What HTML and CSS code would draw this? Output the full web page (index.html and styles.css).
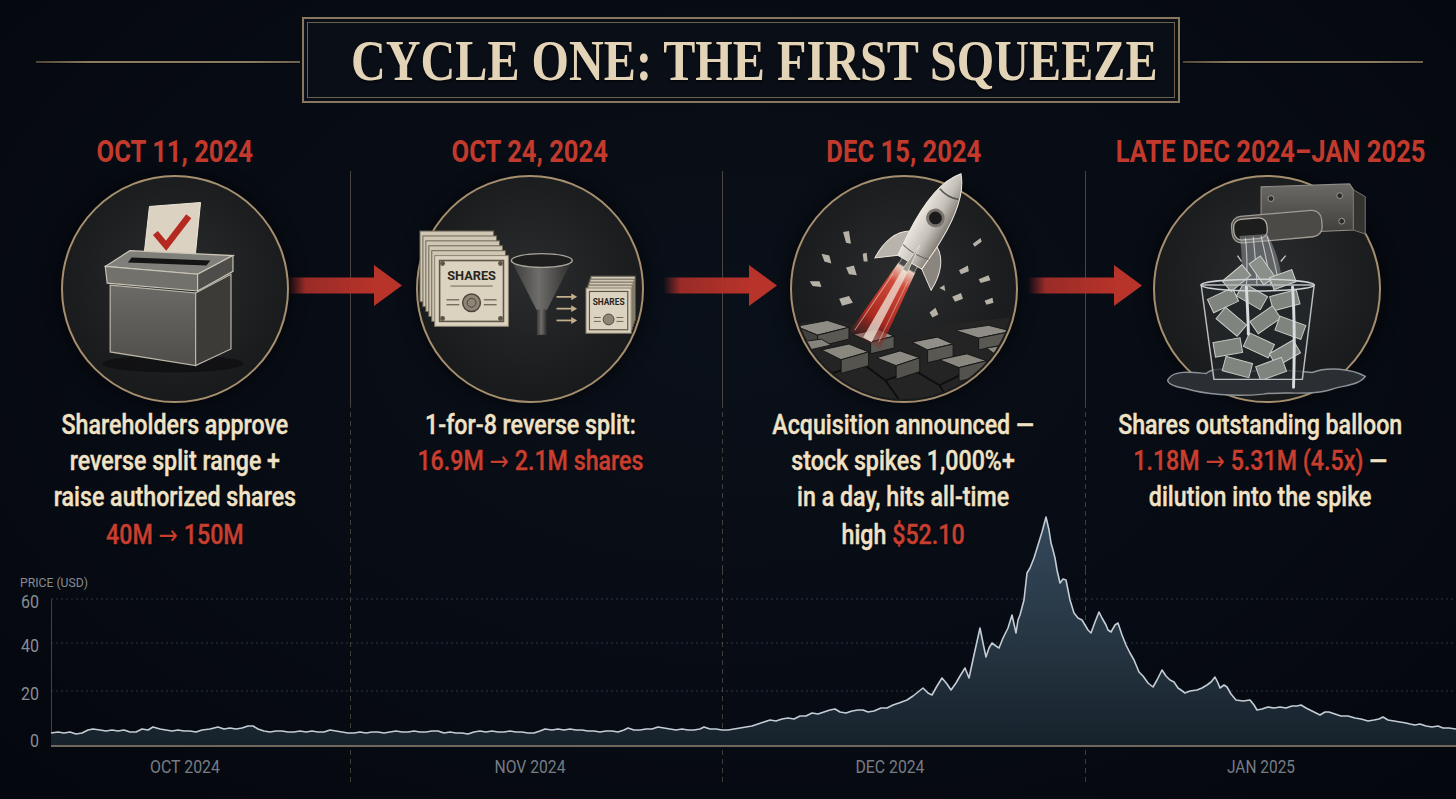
FILE: index.html
```html
<!DOCTYPE html>
<html lang="en">
<head>
<meta charset="utf-8">
<title>Cycle One: The First Squeeze</title>
<link rel="stylesheet" href="styles.css">
</head>
<body>
<div class="page">
  <header class="title-row">
    <span class="rule rule-left"></span>
    <div class="title-box">
      <div class="title-inner">
        <h1 class="title"><span>CYCLE ONE: THE FIRST SQUEEZE</span></h1>
      </div>
    </div>
    <span class="rule rule-right"></span>
  </header>

  <section class="timeline">
    <article class="step step-1">
      <div class="date"><span>OCT 11, 2024</span></div>
      <div class="step-body">
        <div class="medallion">
          <svg viewBox="0 0 228 228">
            <defs>
              <linearGradient id="boxFront" x1="0" y1="0" x2="0" y2="1">
                <stop offset="0" stop-color="#6b6a66"/>
                <stop offset="1" stop-color="#4f4e4a"/>
              </linearGradient>
            </defs>
            <ellipse cx="112" cy="190" rx="72" ry="9" fill="#0d0d0e" opacity=".7"/>
            <polygon points="88,30 140,26 134,86 82,84" fill="#dbd2c1" stroke="#efe8da" stroke-width="1"/>
            <polyline points="94,57 105,70 128,40" fill="none" stroke="#b42a20" stroke-width="6.5" stroke-linejoin="miter"/>
            <polygon points="43,91 68,75 173,80 137,99" fill="#807f7a" stroke="#cbc5b8" stroke-width="1.2"/>
            <polygon points="70,82 150,85 146,90 66,87" fill="#141414"/>
            <polygon points="43,91 137,99 137,116 45,108" fill="#72716c" stroke="#cbc5b8" stroke-width="1.2"/>
            <polygon points="137,99 173,80 173,96 137,116" fill="#4e4d4a" stroke="#cbc5b8" stroke-width="1.2"/>
            <polygon points="48,110 135,118 135,192 48,178" fill="url(#boxFront)" stroke="#bdb7aa" stroke-width="1.2"/>
            <polygon points="135,118 171,99 171,175 135,192" fill="#3c3b38" stroke="#bdb7aa" stroke-width="1.2"/>
          </svg>
        </div>
        <div class="desc">
          <p>Shareholders approve</p>
          <p>reverse split range +</p>
          <p>raise authorized shares</p>
          <p class="hl big">40M <span class="arw">→</span> 150M</p>
        </div>
      </div>
    </article>

    <article class="step step-2">
      <div class="date"><span>OCT 24, 2024</span></div>
      <div class="step-body">
        <div class="medallion">
          <svg viewBox="0 0 228 228">
            <defs>
              <linearGradient id="funnelG" x1="0" y1="0" x2="1" y2="0">
                <stop offset="0" stop-color="#3a3a3a"/>
                <stop offset=".45" stop-color="#6e6d6a"/>
                <stop offset="1" stop-color="#2c2c2c"/>
              </linearGradient>
            </defs>
            <g fill="#cfc6b3" stroke="#6d6555" stroke-width="1">
              <rect x="2" y="55" width="75" height="72"/>
              <rect x="5" y="60" width="75" height="72"/>
              <rect x="8" y="65" width="75" height="72"/>
              <rect x="11" y="70" width="75" height="72"/>
              <rect x="14" y="75" width="75" height="72"/>
            </g>
            <rect x="17" y="80" width="75" height="72" fill="#dbd2bf" stroke="#8b816e" stroke-width="1"/>
            <rect x="22" y="85" width="65" height="62" fill="none" stroke="#5e5647" stroke-width="1.6"/>
            <g fill="#5e5647">
              <circle cx="25" cy="88" r="2.5"/><circle cx="84" cy="88" r="2.5"/>
              <circle cx="25" cy="144" r="2.5"/><circle cx="84" cy="144" r="2.5"/>
            </g>
            <text x="54.5" y="105" class="cert-text big-cert">SHARES</text>
            <line x1="33" y1="111" x2="76" y2="111" stroke="#6d6555" stroke-width="1"/>
            <circle cx="54.5" cy="128" r="9" fill="#8e8576" stroke="#4a443b" stroke-width="1.5"/>
            <circle cx="54.5" cy="128" r="4.5" fill="none" stroke="#4a443b" stroke-width="1"/>
            <g stroke="#6d6555" stroke-width="1.3">
              <line x1="29" y1="125" x2="42" y2="125"/><line x1="29" y1="130" x2="42" y2="130"/>
              <line x1="67" y1="125" x2="80" y2="125"/><line x1="67" y1="130" x2="80" y2="130"/>
            </g>
            <path d="M95,85 L121,136 L131,136 L157,85 Z" fill="url(#funnelG)"/>
            <rect x="121" y="135" width="10" height="27" fill="url(#funnelG)"/>
            <ellipse cx="126" cy="162" rx="5" ry="1.5" fill="#222"/>
            <ellipse cx="126" cy="85" rx="31" ry="7" fill="#1e1e1e" stroke="#a9a49a" stroke-width="1.5"/>
            <g stroke="#c2ae8a" stroke-width="1.8" fill="#c2ae8a">
              <line x1="141" y1="122" x2="157" y2="122"/>
              <line x1="141" y1="134" x2="157" y2="134"/>
              <line x1="141" y1="146" x2="157" y2="146"/>
              <polygon points="156,118.5 162,122 156,125.5" stroke="none"/>
              <polygon points="156,130.5 162,134 156,137.5" stroke="none"/>
              <polygon points="156,142.5 162,146 156,149.5" stroke="none"/>
            </g>
            <g fill="#cfc6b3" stroke="#6d6555" stroke-width="1">
              <rect x="176" y="101" width="45" height="45"/>
              <rect x="175" y="104" width="45" height="45"/>
              <rect x="174" y="107" width="45" height="45"/>
              <rect x="173" y="110" width="45" height="45"/>
            </g>
            <rect x="171" y="113" width="46" height="46" fill="#dbd2bf" stroke="#8b816e" stroke-width="1"/>
            <rect x="174.5" y="116.5" width="39" height="39" fill="none" stroke="#5e5647" stroke-width="1.2"/>
            <text x="194" y="130" class="cert-text small-cert">SHARES</text>
            <circle cx="194" cy="145" r="5.5" fill="#8e8576" stroke="#4a443b" stroke-width="1"/>
            <g stroke="#6d6555" stroke-width="1">
              <line x1="179" y1="143" x2="186" y2="143"/><line x1="179" y1="147" x2="186" y2="147"/>
              <line x1="202" y1="143" x2="209" y2="143"/><line x1="202" y1="147" x2="209" y2="147"/>
            </g>
          </svg>
        </div>
        <div class="desc">
          <p>1-for-8 reverse split:</p>
          <p class="hl">16.9M <span class="arw">→</span> 2.1M shares</p>
        </div>
      </div>
    </article>

    <article class="step step-3">
      <div class="date"><span>DEC 15, 2024</span></div>
      <div class="step-body">
        <div class="medallion">
          <svg viewBox="0 0 228 228">
            <defs>
              <clipPath id="clip3"><circle cx="114" cy="114" r="112"/></clipPath>
              <linearGradient id="flameG" x1="0" y1="8" x2="0" y2="95" gradientUnits="userSpaceOnUse">
                <stop offset="0" stop-color="#eadfd0"/>
                <stop offset=".22" stop-color="#d04a3a"/>
                <stop offset=".7" stop-color="#a9281f"/>
                <stop offset="1" stop-color="#8e1f18" stop-opacity=".15"/>
              </linearGradient>
              <linearGradient id="bodyG" x1="-17" y1="0" x2="17" y2="0" gradientUnits="userSpaceOnUse">
                <stop offset="0" stop-color="#ebe7df"/>
                <stop offset=".55" stop-color="#c4bfb6"/>
                <stop offset="1" stop-color="#7c7871"/>
              </linearGradient>
            </defs>
            <g clip-path="url(#clip3)">
              <path d="M0,150 L40,145 L80,152 L120,162 L160,150 L228,142 L228,228 L0,228Z" fill="#242424"/>
              <path d="M8,190 L40,200 L58,228 M40,200 L72,190 L95,207 L110,228 M95,207 L125,197 L150,212 L160,228 M150,212 L180,197 L208,207 L220,228 M125,197 L120,182 M180,197 L176,180 M72,190 L66,176 M20,214 L40,200" stroke="#0e0e0e" stroke-width="2" fill="none"/>
              <g stroke="#161616" stroke-width="1">
                <polygon points="4,152 36,146 58,153 26,161" fill="#8f8c85"/>
                <polygon points="26,161 58,153 58,165 26,173" fill="#5a5853"/>
                <polygon points="4,152 26,161 26,173 4,164" fill="#44423e"/>
                <polygon points="30,176 58,170 78,178 50,186" fill="#8a877f"/>
                <polygon points="50,186 78,178 78,192 50,200" fill="#56544f"/>
                <polygon points="62,160 88,155 104,162 80,168" fill="#928f88"/>
                <polygon points="80,168 104,162 104,174 80,180" fill="#5a5853"/>
                <polygon points="86,184 110,177 130,184 106,192" fill="#8d8a83"/>
                <polygon points="106,192 130,184 130,198 106,206" fill="#54524d"/>
                <polygon points="122,168 148,163 164,170 138,176" fill="#928f88"/>
                <polygon points="138,176 164,170 164,183 138,189" fill="#5a5853"/>
                <polygon points="150,186 178,180 198,187 170,194" fill="#8a877f"/>
                <polygon points="170,194 198,187 198,201 170,208" fill="#54524d"/>
                <polygon points="166,156 200,151 224,157 190,164" fill="#8f8c85"/>
                <polygon points="190,164 224,157 224,169 190,176" fill="#5a5853"/>
                <polygon points="198,174 224,170 232,177 210,183" fill="#8a877f"/>
                <polygon points="8,168 30,165 40,171 18,176" fill="#86837c"/>
              </g>
            </g>
            <g fill="#b7b2a8">
              <polygon points="52,56 58,55 60,68 55,67"/>
              <polygon points="30,78 38,80 40,88 33,86"/>
              <polygon points="55,92 63,90 66,100 58,99"/>
              <polygon points="18,106 28,106 30,112 21,111"/>
              <polygon points="72,78 76,77 77,86 73,86"/>
              <polygon points="184,68 192,62 193,66 186,71"/>
              <polygon points="170,95 179,90 180,96 172,99"/>
              <polygon points="190,104 200,100 202,105 192,108"/>
              <polygon points="163,122 172,118 174,124 166,127"/>
              <polygon points="140,138 146,133 149,140 143,143"/>
              <polygon points="196,126 204,123 205,128 198,130"/>
              <polygon points="48,124 58,121 62,128 51,131"/>
              <polygon points="150,113 155,110 156,116"/>
            </g>
            <g transform="translate(121,85) rotate(30)">
              <path d="M-10,8 L10,8 L18,94 L-18,94Z" fill="url(#flameG)"/>
              <path d="M-3,8 L3,8 L7,92 L-3,92Z" fill="#efe6da" opacity=".75"/>
              <path d="M-9,20 L-14,90" stroke="#e8d8cc" stroke-width="1" opacity=".6"/>
              <path d="M8,20 L13,88" stroke="#e8d8cc" stroke-width="1" opacity=".5"/>
              <path d="M-15,-26 C-28,-19 -34,-3 -33,16 L-14,2Z" fill="#b9b4ab" stroke="#ebe6dd" stroke-width="1"/>
              <path d="M15,-26 C28,-19 34,-3 33,16 L14,2Z" fill="#8a867f" stroke="#ebe6dd" stroke-width="1"/>
              <rect x="-9" y="0" width="18" height="9" fill="#4a4a4a" stroke="#9a958d" stroke-width="1"/>
              <path d="M0,-102 C14,-86 18,-56 16,-22 L14,2 L-14,2 L-16,-22 C-18,-56 -14,-86 0,-102Z" fill="url(#bodyG)" stroke="#f0ebe2" stroke-width="1"/>
              <path d="M-11,-78 Q0,-74 11,-78" stroke="#55524d" stroke-width="1.5" fill="none"/>
              <path d="M-15,-10 Q0,-6 15,-10" stroke="#6a6761" stroke-width="1.2" fill="none"/>
              <circle cx="0" cy="-50" r="8" fill="#1b1b1b" stroke="#77736c" stroke-width="3"/>
              <path d="M0,-18 L-3,12 L3,12Z" fill="#a29e96" stroke="#e5e0d7" stroke-width=".8"/>
            </g>
          </svg>
        </div>
        <div class="desc">
          <p>Acquisition announced —</p>
          <p>stock spikes 1,000%+</p>
          <p>in a day, hits all-time</p>
          <p class="big">high <span class="hl">$52.10</span></p>
        </div>
      </div>
    </article>

    <article class="step step-4">
      <div class="date"><span>LATE DEC 2024–JAN 2025</span></div>
      <div class="step-body">
        <div class="medallion">
          <svg viewBox="0 0 228 228">
            <defs>
              <clipPath id="glassClip"><polygon points="47,110 162,110 150,206 60,206"/></clipPath>
              <linearGradient id="plateG" x1="0" y1="0" x2="0" y2="1">
                <stop offset="0" stop-color="#6a6965"/>
                <stop offset="1" stop-color="#3f3e3b"/>
              </linearGradient>
            </defs>
            <path d="M14,205 C20,196 40,199 52,200 C60,193 76,196 90,199 C110,195 140,197 160,199 C176,193 200,195 214,203 C208,212 192,212 180,216 C160,223 130,218 110,221 C80,224 50,221 30,215 C18,213 10,209 14,205Z" fill="#2b2f33" stroke="#8d9296" stroke-width="1.5"/>
            <path d="M108,10 L198,7 L202,13 L202,54 L108,58Z" fill="url(#plateG)" stroke="#8e8b84" stroke-width="1.2"/>
            <path d="M202,13 L214,20 L214,58 L202,54Z" fill="#34332f" stroke="#77746e" stroke-width="1"/>
            <g fill="#2a2a2a" stroke="#9d9a93" stroke-width="1">
              <circle cx="118" cy="22" r="3"/><circle cx="188" cy="19" r="3"/>
              <circle cx="118" cy="47" r="3"/><circle cx="190" cy="45" r="3"/>
            </g>
            <g transform="rotate(-5 124 50)">
              <rect x="78" y="37" width="92" height="27" rx="10" fill="#4b4a47" stroke="#a09c94" stroke-width="1.3"/>
              <rect x="80" y="40" width="34" height="21" rx="8" fill="#1d1d1d" stroke="#b2ada4" stroke-width="1.3"/>
            </g>
            <path d="M86,60 C88,72 89,84 88,112 L130,112 C128,88 122,72 114,58Z" fill="#a9aeb1" opacity=".45"/>
            <g stroke="#e4e7e9" stroke-width="1.2" opacity=".7" fill="none">
              <path d="M92,62 C94,78 94,92 93,112"/>
              <path d="M100,61 C102,80 103,95 104,112"/>
              <path d="M108,60 C112,78 116,94 118,112"/>
              <path d="M114,60 C119,76 124,92 126,112"/>
            </g>
            <path d="M47,110 L162,110 L150,206 L60,206Z" fill="#23272a" fill-opacity=".75"/>
            <g clip-path="url(#glassClip)">
              <g fill="#7f847e" stroke="#c9ccc6" stroke-width="1">
                <rect x="55" y="118" width="28" height="15" transform="rotate(-25 69 125)"/>
                <rect x="85" y="114" width="28" height="15" transform="rotate(30 99 121)"/>
                <rect x="118" y="118" width="28" height="15" transform="rotate(-15 132 125)"/>
                <rect x="64" y="140" width="28" height="15" transform="rotate(40 78 147)"/>
                <rect x="98" y="138" width="28" height="15" transform="rotate(-35 112 145)"/>
                <rect x="124" y="146" width="28" height="15" transform="rotate(20 138 153)"/>
                <rect x="60" y="166" width="28" height="15" transform="rotate(-10 74 173)"/>
                <rect x="92" y="164" width="28" height="15" transform="rotate(25 106 171)"/>
                <rect x="118" y="172" width="28" height="15" transform="rotate(-30 132 179)"/>
                <rect x="70" y="186" width="28" height="15" transform="rotate(15 84 193)"/>
                <rect x="104" y="188" width="28" height="15" transform="rotate(-20 118 195)"/>
              </g>
            </g>
            <g fill="#8a8f89" stroke="#d0d3cd" stroke-width="1">
              <rect x="70" y="96" width="26" height="14" transform="rotate(-40 83 103)"/>
              <rect x="96" y="88" width="26" height="14" transform="rotate(55 109 95)"/>
              <rect x="118" y="98" width="24" height="13" transform="rotate(-20 130 104)"/>
            </g>
            <path d="M47,110 L162,110 L150,206 L60,206Z" fill="none" stroke="#b9bdc0" stroke-width="1.5"/>
            <ellipse cx="104.5" cy="110" rx="57.5" ry="6" fill="none" stroke="#d0d3d6" stroke-width="1.6"/>
            <path d="M93,112 C94,130 95,150 95,160" stroke="#d9dcde" stroke-width="3" fill="none" stroke-linecap="round"/>
            <path d="M140,112 C142,140 142,180 141,214" stroke="#d9dcde" stroke-width="3" fill="none" stroke-linecap="round"/>
            <g stroke="#c9ccce" stroke-width="1.3">
              <line x1="88" y1="86" x2="84" y2="80"/><line x1="128" y1="86" x2="133" y2="80"/>
            </g>
          </svg>
        </div>
        <div class="desc">
          <p>Shares outstanding balloon</p>
          <p><span class="hl">1.18M <span class="arw">→</span> 5.31M (4.5x)</span> —</p>
          <p>dilution into the spike</p>
        </div>
      </div>
    </article>

    <svg class="arrow arrow-1" viewBox="0 0 114 41">
      <defs>
        <linearGradient id="shaftG" x1="0" y1="0" x2="1" y2="0">
          <stop offset="0" stop-color="#b3302a" stop-opacity="0"/>
          <stop offset=".2" stop-color="#b3302a" stop-opacity=".85"/>
          <stop offset="1" stop-color="#b8332a"/>
        </linearGradient>
      </defs>
      <rect x="0" y="12.5" width="88" height="16" fill="url(#shaftG)"/>
      <polygon points="86,0 114,20.5 86,41" fill="#b8332a"/>
    </svg>
    <svg class="arrow arrow-2" viewBox="0 0 114 41">
      <rect x="0" y="12.5" width="88" height="16" fill="url(#shaftG)"/>
      <polygon points="86,0 114,20.5 86,41" fill="#b8332a"/>
    </svg>
    <svg class="arrow arrow-3" viewBox="0 0 114 41">
      <rect x="0" y="12.5" width="88" height="16" fill="url(#shaftG)"/>
      <polygon points="86,0 114,20.5 86,41" fill="#b8332a"/>
    </svg>
  </section>

  <section class="chart">
    <svg viewBox="0 570 1456 229" class="chart-svg">
      <defs>
        <linearGradient id="areaG" x1="0" y1="517" x2="0" y2="746" gradientUnits="userSpaceOnUse">
          <stop offset="0" stop-color="#35495c"/>
          <stop offset=".6" stop-color="#24333f"/>
          <stop offset="1" stop-color="#16212b"/>
        </linearGradient>
      </defs>
      <text x="20" y="587" class="axis-title" textLength="68" lengthAdjust="spacingAndGlyphs">PRICE (USD)</text>
      <g class="grid">
        <line x1="51" y1="599" x2="1456" y2="599"/>
        <line x1="51" y1="643" x2="1456" y2="643"/>
        <line x1="51" y1="691" x2="1456" y2="691"/>
      </g>
      <g class="dividers">
        <line x1="350.5" y1="570" x2="350.5" y2="786"/>
        <line x1="722.5" y1="570" x2="722.5" y2="786"/>
        <line x1="1085.5" y1="570" x2="1085.5" y2="786"/>
      </g>
      <line x1="51.5" y1="599" x2="51.5" y2="746" class="yaxis"/>
      <text x="39" y="608" class="tick ytick" textLength="18" lengthAdjust="spacingAndGlyphs">60</text>
      <text x="39" y="652" class="tick ytick" textLength="18" lengthAdjust="spacingAndGlyphs">40</text>
      <text x="39" y="700" class="tick ytick" textLength="18" lengthAdjust="spacingAndGlyphs">20</text>
      <text x="39" y="747" class="tick ytick" textLength="9" lengthAdjust="spacingAndGlyphs">0</text>
      <polygon class="area" points="51,746 51,733 58,732 64,733 70,732 76,734 82,733 88,730 93,729 100,730 106,731 112,730 118,731 124,730 130,732 136,732 142,729 148,730 153,727 160,729 166,730 172,731 178,730 184,731 190,731 196,732 202,730 210,729 218,727 224,729 230,728 236,729 242,728 248,726 253,726 258,729 264,731 270,732 276,731 282,731 288,732 294,732 300,731 306,732 312,731 318,732 324,732 330,730 336,731 342,732 348,733 354,733 360,732 366,733 372,732 378,732 384,733 390,732 396,731 402,732 408,732 414,731 420,732 426,732 432,731 438,731 444,733 450,732 456,733 462,733 468,734 474,732 480,731 486,732 492,731 498,732 504,732 510,731 516,732 522,732 528,733 534,733 540,731 545,729 552,730 558,729 564,730 570,729 576,730 582,730 588,731 594,731 600,732 606,731 612,731 618,732 624,730 628,728 634,730 640,730 646,729 652,729 658,727 664,728 670,729 676,730 682,729 688,730 694,730 700,729 704,727 710,729 716,729 722,730 728,730 734,729 740,728 746,727 752,726 758,724 764,722 770,720 776,721 782,719 788,718 794,719 800,716 806,716 812,713 818,714 824,712 830,710 835,709 840,712 846,713 852,711 858,710 863,710 868,712 874,711 881,708 887,708 893,705 899,703 907,700 913,696 918,692 923,688 928,693 932,695 937,686 942,678 947,684 951,690 956,683 960,676 965,668 969,678 974,655 980,628 983,643 986,657 989,648 992,643 996,646 999,648 1003,638 1008,628 1012,615 1016,633 1018,620 1020,615 1024,600 1027,573 1030,568 1034,558 1038,545 1042,532 1046,517 1049,530 1051,543 1053,550 1055,558 1057,570 1060,583 1063,579 1066,580 1070,600 1074,613 1078,618 1082,620 1085,625 1088,630 1091,633 1095,622 1099,612 1102,618 1106,625 1108,630 1111,632 1115,625 1118,623 1122,635 1126,645 1130,653 1134,660 1139,672 1143,676 1148,683 1153,687 1157,680 1162,670 1166,676 1170,680 1174,682 1178,688 1181,690 1185,693 1190,691 1197,690 1202,688 1207,685 1211,682 1215,677 1218,683 1220,688 1224,685 1227,687 1231,694 1236,700 1243,701 1250,700 1254,705 1257,710 1262,709 1268,707 1274,708 1280,707 1286,708 1292,706 1297,706 1301,705 1306,708 1312,711 1316,713 1320,715 1325,712 1329,712 1335,714 1341,716 1348,716 1355,718 1361,719 1368,721 1374,720 1379,719 1383,717 1388,720 1394,721 1400,722 1406,723 1410,724 1415,725 1420,724 1426,726 1432,727 1438,726 1443,728 1449,728 1456,729 1456,746"/>
      <polyline class="price" points="51,733 58,732 64,733 70,732 76,734 82,733 88,730 93,729 100,730 106,731 112,730 118,731 124,730 130,732 136,732 142,729 148,730 153,727 160,729 166,730 172,731 178,730 184,731 190,731 196,732 202,730 210,729 218,727 224,729 230,728 236,729 242,728 248,726 253,726 258,729 264,731 270,732 276,731 282,731 288,732 294,732 300,731 306,732 312,731 318,732 324,732 330,730 336,731 342,732 348,733 354,733 360,732 366,733 372,732 378,732 384,733 390,732 396,731 402,732 408,732 414,731 420,732 426,732 432,731 438,731 444,733 450,732 456,733 462,733 468,734 474,732 480,731 486,732 492,731 498,732 504,732 510,731 516,732 522,732 528,733 534,733 540,731 545,729 552,730 558,729 564,730 570,729 576,730 582,730 588,731 594,731 600,732 606,731 612,731 618,732 624,730 628,728 634,730 640,730 646,729 652,729 658,727 664,728 670,729 676,730 682,729 688,730 694,730 700,729 704,727 710,729 716,729 722,730 728,730 734,729 740,728 746,727 752,726 758,724 764,722 770,720 776,721 782,719 788,718 794,719 800,716 806,716 812,713 818,714 824,712 830,710 835,709 840,712 846,713 852,711 858,710 863,710 868,712 874,711 881,708 887,708 893,705 899,703 907,700 913,696 918,692 923,688 928,693 932,695 937,686 942,678 947,684 951,690 956,683 960,676 965,668 969,678 974,655 980,628 983,643 986,657 989,648 992,643 996,646 999,648 1003,638 1008,628 1012,615 1016,633 1018,620 1020,615 1024,600 1027,573 1030,568 1034,558 1038,545 1042,532 1046,517 1049,530 1051,543 1053,550 1055,558 1057,570 1060,583 1063,579 1066,580 1070,600 1074,613 1078,618 1082,620 1085,625 1088,630 1091,633 1095,622 1099,612 1102,618 1106,625 1108,630 1111,632 1115,625 1118,623 1122,635 1126,645 1130,653 1134,660 1139,672 1143,676 1148,683 1153,687 1157,680 1162,670 1166,676 1170,680 1174,682 1178,688 1181,690 1185,693 1190,691 1197,690 1202,688 1207,685 1211,682 1215,677 1218,683 1220,688 1224,685 1227,687 1231,694 1236,700 1243,701 1250,700 1254,705 1257,710 1262,709 1268,707 1274,708 1280,707 1286,708 1292,706 1297,706 1301,705 1306,708 1312,711 1316,713 1320,715 1325,712 1329,712 1335,714 1341,716 1348,716 1355,718 1361,719 1368,721 1374,720 1379,719 1383,717 1388,720 1394,721 1400,722 1406,723 1410,724 1415,725 1420,724 1426,726 1432,727 1438,726 1443,728 1449,728 1456,729"/>
      <line x1="51" y1="746" x2="1456" y2="746" class="baseline"/>
      <text x="185" y="773" class="tick xtick" textLength="70" lengthAdjust="spacingAndGlyphs">OCT 2024</text>
      <text x="530" y="773" class="tick xtick" textLength="71" lengthAdjust="spacingAndGlyphs">NOV 2024</text>
      <text x="890" y="773" class="tick xtick" textLength="69" lengthAdjust="spacingAndGlyphs">DEC 2024</text>
      <text x="1261" y="773" class="tick xtick" textLength="68" lengthAdjust="spacingAndGlyphs">JAN 2025</text>
    </svg>
  </section>
</div>
</body>
</html>
```

FILE: styles.css
```css
* {
  box-sizing: border-box;
  margin: 0;
  padding: 0;
}

html, body {
  background: #060a12;
}

body {
  width: 1456px;
  height: 799px;
  overflow: hidden;
  font-family: Roboto, "Liberation Sans", "DejaVu Sans", sans-serif;
}

.page {
  width: 1456px;
  height: 799px;
  display: flex;
  flex-direction: column;
  background: radial-gradient(ellipse at 50% 42%, #0a1019 0%, #070b13 60%, #04070d 100%);
}

/* ---------- Title ---------- */
.title-row {
  display: flex;
  align-items: flex-start;
  height: 86px;
  margin-top: 17px;
  flex-shrink: 0;
}

.rule {
  display: block;
  height: 2px;
  margin-top: 44px;
  background: linear-gradient(to right, #4d4538, #8a7b62 20%, #8a7b62 80%, #6d614f);
  box-shadow: 0 1px 0 rgba(0, 0, 0, .6);
}

.rule-left {
  width: 264px;
  margin-left: 36px;
  margin-right: 2px;
}

.rule-right {
  width: 240px;
  margin-left: 3px;
}

.title-box {
  width: 878px;
  height: 86px;
  border: 2px solid #86775e;
  padding: 3px;
  background: #0a0f17;
}

.title-inner {
  height: 100%;
  border: 1px solid #6b604d;
  display: flex;
  align-items: center;
  justify-content: center;
  padding-left: 26px;
}

.title {
  font-family: "Liberation Serif", "DejaVu Serif", serif;
  font-weight: 700;
  font-size: 57px;
  line-height: 1;
  color: #e3d3b7;
  white-space: nowrap;
  text-shadow: 0 2px 2px rgba(0, 0, 0, .6);
}

.title span {
  display: inline-block;
  transform: scaleX(.845);
}

/* ---------- Timeline ---------- */
.timeline {
  position: relative;
  display: grid;
  grid-template-columns: 350px 372px 363px 371px;
  margin-top: 28px;
  flex-shrink: 0;
}

.step {
  display: flex;
  flex-direction: column;
  align-items: center;
}

.step-2 {
  padding-right: 12px;
}

.date {
  height: 40px;
  line-height: 40px;
  font-weight: 700;
  font-size: 32px;
  color: #c33a2d;
  white-space: nowrap;
}

.date span {
  display: inline-block;
  transform: scaleX(.8);
}

.step-body {
  align-self: stretch;
  height: 399px;
  display: flex;
  flex-direction: column;
  align-items: center;
  padding-top: 4px;
}

.step-2 .step-body,
.step-3 .step-body,
.step-4 .step-body {
  background:
    linear-gradient(rgba(150, 138, 116, .45), rgba(150, 138, 116, .45)) left top / 1px 232px no-repeat,
    repeating-linear-gradient(to bottom, rgba(150, 138, 116, .4) 0 5px, transparent 5px 9px) left 232px / 1px 100% no-repeat;
}

.medallion {
  width: 228px;
  height: 228px;
  flex-shrink: 0;
  border-radius: 50%;
  border: 2px solid #a58f6e;
  background: radial-gradient(circle at 50% 45%, #2b2c2e 0%, #1d1e20 55%, #131416 100%);
  box-shadow: 0 0 18px rgba(0, 0, 0, .7);
}

.medallion svg {
  display: block;
  width: 100%;
  height: 100%;
  overflow: visible;
}

.step-4 .medallion {
  margin-right: 8px;
}

.cert-text {
  font-family: Roboto, "Liberation Sans", sans-serif;
  font-weight: 700;
  fill: #2a2520;
  text-anchor: middle;
}

.big-cert {
  font-size: 13px;
}

.small-cert {
  font-size: 8.5px;
}

.desc {
  margin-top: 4px;
  text-align: center;
  font-size: 27px;
  font-weight: 500;
  line-height: 36px;
  color: #f0e2c6;
  white-space: nowrap;
  transform: scaleX(.86);
  -webkit-text-stroke: .4px currentColor;
  text-shadow: 0 1px 2px rgba(0, 0, 0, .7);
}

.step-4 .desc {
  margin-right: 20px;
}

.desc .big {
  margin-top: 2px;
}

.hl {
  color: #c83e2f;
}

.arw {
  font-family: "DejaVu Sans", sans-serif;
  font-size: 27px;
  font-weight: 400;
  line-height: 1;
  -webkit-text-stroke: 0;
}

.arrow {
  position: absolute;
  top: 134px;
  width: 114px;
  height: 41px;
}

.arrow-1 { left: 288px; }
.arrow-2 { left: 663px; }
.arrow-3 { left: 1028px; }

/* ---------- Chart ---------- */
.chart {
  height: 229px;
  flex-shrink: 0;
}

.chart-svg {
  display: block;
  width: 1456px;
  height: 229px;
  overflow: visible;
}

.axis-title {
  font-family: Roboto, "Liberation Sans", sans-serif;
  font-size: 13px;
  fill: #868c94;
}

.tick {
  font-family: Roboto, "Liberation Sans", sans-serif;
  fill: #878d95;
}

.ytick {
  font-size: 19px;
  text-anchor: end;
}

.xtick {
  font-size: 18px;
  text-anchor: middle;
  fill: #767c84;
}

.grid line {
  stroke: rgba(130, 140, 152, .35);
  stroke-width: 1;
  stroke-dasharray: 2 3;
}

.dividers line {
  stroke: rgba(150, 138, 116, .4);
  stroke-width: 1;
  stroke-dasharray: 5 4;
}

.yaxis {
  stroke: #3c424a;
  stroke-width: 1;
}

.area {
  fill: url(#areaG);
}

.price {
  fill: none;
  stroke: #c3ccd4;
  stroke-width: 1.6;
  stroke-linejoin: round;
}

.baseline {
  stroke: #6d675c;
  stroke-width: 2;
}
```
